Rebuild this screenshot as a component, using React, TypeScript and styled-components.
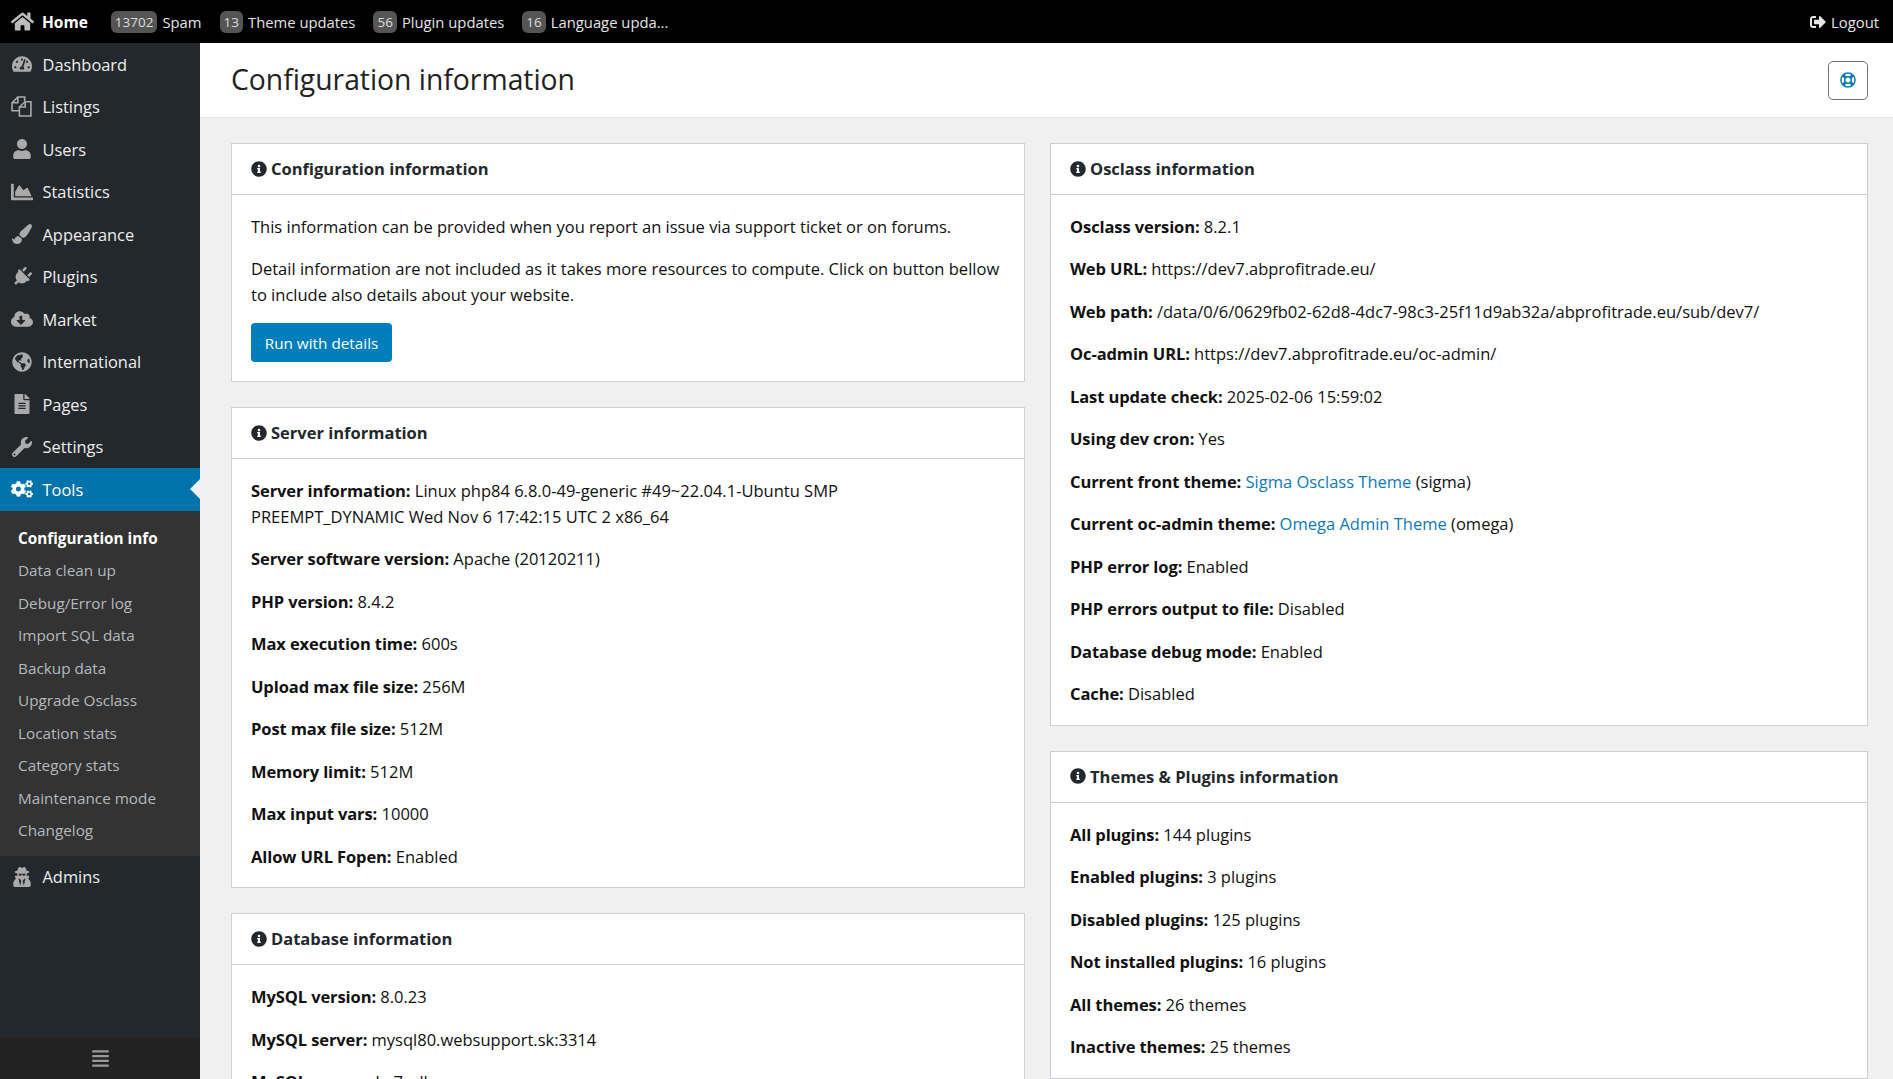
import React from "react";
import styled, { createGlobalStyle } from "styled-components";
import {
  FaHome,
  FaSignOutAlt,
  FaRegLifeRing,
  FaInfoCircle,
  FaTachometerAlt,
  FaUser,
  FaChartArea,
  FaPaintBrush,
  FaPlug,
  FaCloudDownloadAlt,
  FaGlobeAmericas,
  FaFileAlt,
  FaWrench,
  FaCogs,
  FaUserSecret,
  FaAlignJustify,
} from "react-icons/fa";

const GlobalStyle = createGlobalStyle`
  html, body { margin: 0; padding: 0; height: 100%; overflow: hidden; }
  body {
    font-family: "Open Sans", "Liberation Sans", sans-serif;
    font-size: 16.5px;
    color: #111;
    background: #f0f0f0;
  }
  * { box-sizing: border-box; }
`;

const Page = styled.div`
  height: 100vh;
  display: flex;
  flex-direction: column;
  overflow: hidden;
`;

const TopBar = styled.header`
  height: 43px;
  flex: none;
  background: #000;
  color: #eee;
  display: flex;
  align-items: center;
  padding: 0 14px 0 11px;
  font-size: 14.8px;
`;

const HomeLink = styled.a`
  display: flex;
  align-items: center;
  gap: 8px;
  color: #fff;
  font-weight: 700;
  font-size: 15.5px;
  margin-right: 23px;
  svg { font-size: 21px; color: #bbb; width: 23px; }
`;

const TopItem = styled.a`
  display: flex;
  align-items: center;
  gap: 5px;
  margin-right: 18px;
  color: #e4e4e4;
`;

const Badge = styled.span`
  height: 22px;
  padding: 0 4px;
  min-width: 23px;
  border-radius: 6px;
  background: #555;
  color: #ddd;
  font-size: 13.5px;
  line-height: 22px;
  text-align: center;
`;

const Logout = styled.a`
  margin-left: auto;
  display: flex;
  align-items: center;
  gap: 5px;
  color: #e4e4e4;
`;

const Body = styled.div`
  flex: 1;
  min-height: 0;
  display: flex;
`;

const Side = styled.nav`
  width: 200px;
  flex: none;
  background: #23282d;
  display: flex;
  flex-direction: column;
`;

const NavList = styled.div`
  flex: 1;
`;

const NavItem = styled.a<{ $active?: boolean }>`
  position: relative;
  height: 42.5px;
  display: flex;
  align-items: center;
  padding-left: 10px;
  font-size: 16.4px;
  color: ${(p) => (p.$active ? "#fff" : "#eee")};
  background: ${(p) => (p.$active ? "#0073aa" : "transparent")};
  svg { color: ${(p) => (p.$active ? "#fff" : "#aaa")}; }
  ${(p) =>
    p.$active &&
    `&::after {
      content: "";
      position: absolute;
      right: 0;
      top: 11px;
      border-style: solid;
      border-width: 10.5px 10px 10.5px 0;
      border-color: transparent #f0f0f0 transparent transparent;
    }`}
`;

const NavIcon = styled.span<{ $size?: number; $turn?: number }>`
  width: 23px;
  margin-right: 9.5px;
  display: flex;
  justify-content: center;
  font-size: ${(p) => p.$size ?? 20}px;
  svg { transform: rotate(${(p) => p.$turn ?? 0}deg); }
`;

const SubNav = styled.div`
  background: #333;
  padding: 11px 0 9px;
`;

const SubItem = styled.a<{ $active?: boolean }>`
  height: 32.5px;
  display: flex;
  align-items: center;
  padding-left: 18px;
  font-size: 15.3px;
  color: ${(p) => (p.$active ? "#fff" : "#b4b9be")};
  font-weight: ${(p) => (p.$active ? 700 : 400)};
`;

const Collapse = styled.div`
  height: 41px;
  flex: none;
  background: #222;
  color: #999;
  display: flex;
  align-items: center;
  justify-content: center;
  font-size: 19px;
`;

const Main = styled.main`
  flex: 1;
  min-width: 0;
  overflow: hidden;
`;

const Head = styled.div`
  height: 75px;
  background: #fff;
  border-bottom: 1px solid #e2e2e2;
  display: flex;
  align-items: center;
  justify-content: space-between;
  padding: 0 25px 0 31px;
`;

const Title = styled.h1`
  margin: 0;
  font-size: 28.3px;
  font-weight: 400;
  color: #222;
  position: relative;
  top: -1px;
`;

const HelpButton = styled.button`
  width: 40px;
  height: 39px;
  background: #fff;
  border: 1px solid #6c757d;
  border-radius: 5px;
  color: #0e7ab5;
  font-size: 16px;
  display: flex;
  align-items: center;
  justify-content: center;
  padding: 0;
`;

const Columns = styled.div`
  display: grid;
  grid-template-columns: 794px 818px;
  gap: 25px;
  padding: 25px 25px 0 31px;
  align-items: start;
`;

const Column = styled.div`
  display: flex;
  flex-direction: column;
  gap: 25.2px;
`;

const Card = styled.section`
  background: #fff;
  border: 1px solid #ccd0d4;
`;

const CardHead = styled.h2`
  margin: 0;
  height: 51px;
  padding: 0 19px 1px;
  border-bottom: 1px solid #ccd0d4;
  display: flex;
  align-items: center;
  gap: 4px;
  font-size: 16.5px;
  font-weight: 700;
  color: #23282d;
`;

const CardBody = styled.div`
  padding: 19px 19px 18px;
`;

const Row = styled.p`
  margin: 0 0 17.2px;
  line-height: 25.3px;
  &:last-child { margin-bottom: 0; }
`;

const Label = styled.b`
  font-weight: 700;
  letter-spacing: -0.1px;
`;

const TextLink = styled.a`
  color: #0e7ab5;
`;

const RunButton = styled.button`
  display: block;
  height: 39px;
  width: 141px;
  margin: -1px 0 1px;
  padding: 0;
  border: 0;
  border-radius: 4px;
  background: #007dbb;
  color: #fff;
  font: 400 15.3px "Open Sans", "Liberation Sans", sans-serif;
`;

const FilesIcon = () => (
  <svg width="21" height="21" viewBox="0 0 20 20" fill="none" stroke="currentColor" strokeWidth="1.5">
    <path d="M13 5V1H6.5L1 6.5V14H8" />
    <path d="M6.5 1V6.5H1" />
    <path d="M13.5 5.5H19V19H8V10.5Z" />
    <path d="M13.5 5.5V10.5H8" />
  </svg>
);

type Info = [string, React.ReactNode];

const navTop = [
  { icon: FaTachometerAlt, label: "Dashboard" },
  { icon: FilesIcon, label: "Listings" },
  { icon: FaUser, label: "Users" },
  { icon: FaChartArea, label: "Statistics", size: 22 },
  { icon: FaPaintBrush, label: "Appearance" },
  { icon: FaPlug, label: "Plugins", turn: 45 },
  { icon: FaCloudDownloadAlt, label: "Market", size: 22 },
  { icon: FaGlobeAmericas, label: "International" },
  { icon: FaFileAlt, label: "Pages" },
  { icon: FaWrench, label: "Settings" },
];

const toolLinks = [
  "Configuration info",
  "Data clean up",
  "Debug/Error log",
  "Import SQL data",
  "Backup data",
  "Upgrade Osclass",
  "Location stats",
  "Category stats",
  "Maintenance mode",
  "Changelog",
];

const serverInfo: Info[] = [
  ["Server information", <>Linux php84 6.8.0-49-generic #49~22.04.1-Ubuntu SMP<br />PREEMPT_DYNAMIC Wed Nov 6 17:42:15 UTC 2 x86_64</>],
  ["Server software version", "Apache (20120211)"],
  ["PHP version", "8.4.2"],
  ["Max execution time", "600s"],
  ["Upload max file size", "256M"],
  ["Post max file size", "512M"],
  ["Memory limit", "512M"],
  ["Max input vars", "10000"],
  ["Allow URL Fopen", "Enabled"],
];

const databaseInfo: Info[] = [
  ["MySQL version", "8.0.23"],
  ["MySQL server", "mysql80.websupport.sk:3314"],
  ["MySQL name", "abc7_all"],
];

const osclassInfo: Info[] = [
  ["Osclass version", "8.2.1"],
  ["Web URL", "https://dev7.abprofitrade.eu/"],
  ["Web path", "/data/0/6/0629fb02-62d8-4dc7-98c3-25f11d9ab32a/abprofitrade.eu/sub/dev7/"],
  ["Oc-admin URL", "https://dev7.abprofitrade.eu/oc-admin/"],
  ["Last update check", "2025-02-06 15:59:02"],
  ["Using dev cron", "Yes"],
  ["Current front theme", <><TextLink>Sigma Osclass Theme</TextLink> (sigma)</>],
  ["Current oc-admin theme", <><TextLink>Omega Admin Theme</TextLink> (omega)</>],
  ["PHP error log", "Enabled"],
  ["PHP errors output to file", "Disabled"],
  ["Database debug mode", "Enabled"],
  ["Cache", "Disabled"],
];

const pluginInfo: Info[] = [
  ["All plugins", "144 plugins"],
  ["Enabled plugins", "3 plugins"],
  ["Disabled plugins", "125 plugins"],
  ["Not installed plugins", "16 plugins"],
  ["All themes", "26 themes"],
  ["Inactive themes", "25 themes"],
];

const InfoCard = ({ title, rows }: { title: string; rows: Info[] }) => (
  <Card>
    <CardHead>
      <FaInfoCircle size={16} />
      {title}
    </CardHead>
    <CardBody>
      {rows.map(([label, value]) => (
        <Row key={label}>
          <Label>{label}:</Label> {value}
        </Row>
      ))}
    </CardBody>
  </Card>
);

const App = () => {
  return (
    <Page>
      <GlobalStyle />
      <TopBar>
        <HomeLink>
          <FaHome />
          Home
        </HomeLink>
        <TopItem><Badge>13702</Badge>Spam</TopItem>
        <TopItem><Badge>13</Badge>Theme updates</TopItem>
        <TopItem><Badge>56</Badge>Plugin updates</TopItem>
        <TopItem><Badge>16</Badge>Language upda...</TopItem>
        <Logout>
          <FaSignOutAlt size={16} />
          Logout
        </Logout>
      </TopBar>
      <Body>
        <Side>
          <NavList>
            {navTop.map(({ icon: Icon, label, size, turn }) => (
              <NavItem key={label}>
                <NavIcon $size={size} $turn={turn}><Icon /></NavIcon>
                {label}
              </NavItem>
            ))}
            <NavItem $active>
              <NavIcon $size={22}><FaCogs /></NavIcon>
              Tools
            </NavItem>
            <SubNav>
              {toolLinks.map((label, i) => (
                <SubItem key={label} $active={i === 0}>{label}</SubItem>
              ))}
            </SubNav>
            <NavItem>
              <NavIcon><FaUserSecret /></NavIcon>
              Admins
            </NavItem>
          </NavList>
          <Collapse><FaAlignJustify /></Collapse>
        </Side>
        <Main>
          <Head>
            <Title>Configuration information</Title>
            <HelpButton><FaRegLifeRing /></HelpButton>
          </Head>
          <Columns>
            <Column>
              <Card>
                <CardHead>
                  <FaInfoCircle size={16} />
                  Configuration information
                </CardHead>
                <CardBody>
                  <Row>This information can be provided when you report an issue via support ticket or on forums.</Row>
                  <Row>Detail information are not included as it takes more resources to compute. Click on button bellow to include also details about your website.</Row>
                  <RunButton>Run with details</RunButton>
                </CardBody>
              </Card>
              <InfoCard title="Server information" rows={serverInfo} />
              <InfoCard title="Database information" rows={databaseInfo} />
            </Column>
            <Column>
              <InfoCard title="Osclass information" rows={osclassInfo} />
              <InfoCard title="Themes & Plugins information" rows={pluginInfo} />
            </Column>
          </Columns>
        </Main>
      </Body>
    </Page>
  );
};

export default App;
